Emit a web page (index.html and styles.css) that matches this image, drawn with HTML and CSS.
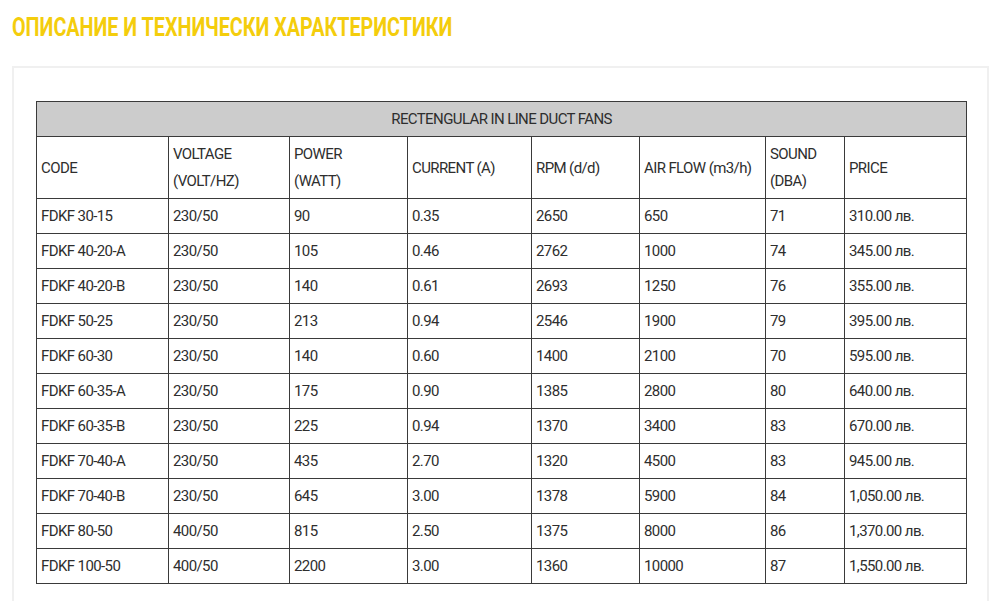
FILE: index.html
```html
<!DOCTYPE html>
<html lang="bg">
<head>
<meta charset="utf-8">
<link rel="stylesheet" href="styles.css">
</head>
<body>
<h2 class="title"><span class="title-text">ОПИСАНИЕ И ТЕХНИЧЕСКИ ХАРАКТЕРИСТИКИ</span></h2>
<div class="card">
<table class="specs">
<colgroup>
<col style="width:132px"><col style="width:121px"><col style="width:118px"><col style="width:124px"><col style="width:108px"><col style="width:126px"><col style="width:79px"><col style="width:122px">
</colgroup>
<tr class="caption-row"><td colspan="8">RECTENGULAR IN LINE DUCT FANS</td></tr>
<tr><td>CODE</td><td>VOLTAGE<br>(VOLT/HZ)</td><td>POWER<br>(WATT)</td><td>CURRENT (A)</td><td>RPM (d/d)</td><td>AIR FLOW (m3/h)</td><td>SOUND<br>(DBA)</td><td>PRICE</td></tr>
<tr><td>FDKF 30-15</td><td>230/50</td><td>90</td><td>0.35</td><td>2650</td><td>650</td><td>71</td><td>310.00 лв.</td></tr>
<tr><td>FDKF 40-20-A</td><td>230/50</td><td>105</td><td>0.46</td><td>2762</td><td>1000</td><td>74</td><td>345.00 лв.</td></tr>
<tr><td>FDKF 40-20-B</td><td>230/50</td><td>140</td><td>0.61</td><td>2693</td><td>1250</td><td>76</td><td>355.00 лв.</td></tr>
<tr><td>FDKF 50-25</td><td>230/50</td><td>213</td><td>0.94</td><td>2546</td><td>1900</td><td>79</td><td>395.00 лв.</td></tr>
<tr><td>FDKF 60-30</td><td>230/50</td><td>140</td><td>0.60</td><td>1400</td><td>2100</td><td>70</td><td>595.00 лв.</td></tr>
<tr><td>FDKF 60-35-A</td><td>230/50</td><td>175</td><td>0.90</td><td>1385</td><td>2800</td><td>80</td><td>640.00 лв.</td></tr>
<tr><td>FDKF 60-35-B</td><td>230/50</td><td>225</td><td>0.94</td><td>1370</td><td>3400</td><td>83</td><td>670.00 лв.</td></tr>
<tr><td>FDKF 70-40-A</td><td>230/50</td><td>435</td><td>2.70</td><td>1320</td><td>4500</td><td>83</td><td>945.00 лв.</td></tr>
<tr><td>FDKF 70-40-B</td><td>230/50</td><td>645</td><td>3.00</td><td>1378</td><td>5900</td><td>84</td><td>1,050.00 лв.</td></tr>
<tr><td>FDKF 80-50</td><td>400/50</td><td>815</td><td>2.50</td><td>1375</td><td>8000</td><td>86</td><td>1,370.00 лв.</td></tr>
<tr><td>FDKF 100-50</td><td>400/50</td><td>2200</td><td>3.00</td><td>1360</td><td>10000</td><td>87</td><td>1,550.00 лв.</td></tr>
</table>
</div>
</body>
</html>
```
FILE: styles.css
```css
html, body {
  margin: 0;
  padding: 0;
  background: #ffffff;
}
body {
  padding: 0 11px 0 12px;
  font-family: Roboto, "Noto Sans", sans-serif;
  color: #333333;
}
.title {
  margin: 0;
  padding-top: 14px;
  height: 66px;
  box-sizing: border-box;
  font-size: 25px;
  line-height: 27px;
  font-weight: 700;
  color: #f4cd0c;
  white-space: nowrap;
}
.title-text {
  display: inline-block;
  transform: scaleX(0.79);
  transform-origin: left center;
}
.card {
  border: 2px solid #f0f0f0;
  border-bottom: none;
  padding: 33px 21px 19px 22px;
}
.specs {
  border-collapse: collapse;
  table-layout: fixed;
  width: 930px;
  font-size: 15px;
  letter-spacing: -0.6px;
}
.specs td {
  border: 1px solid #3a3a3a;
  padding: 4px 4px 3px 4px;
  line-height: 27px;
  vertical-align: middle;
  text-align: left;
  color: #2e2e2e;
}
.caption-row td {
  background: #cccccc;
  text-align: center;
}
```
